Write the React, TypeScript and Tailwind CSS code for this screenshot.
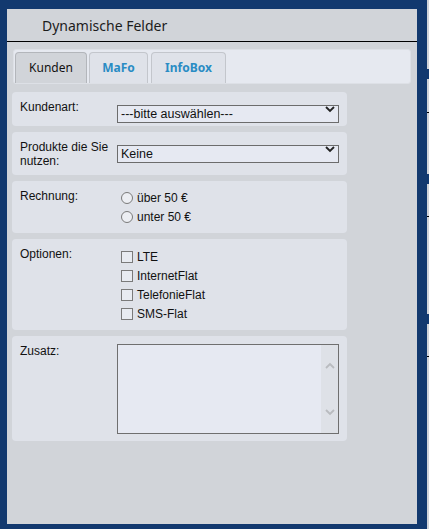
import React from 'react';

const arial = { fontFamily: '"Liberation Sans", Arial, sans-serif' };

const Chevron: React.FC<{ up?: boolean; className?: string }> = ({ up, className }) => (
  <svg width="10" height="7" viewBox="0 0 10 7" className={className}>
    <path
      d={up ? 'M1 6 L5 2 L9 6' : 'M1 1 L5 5 L9 1'}
      fill="none"
      stroke="currentColor"
      strokeWidth="1.8"
    />
  </svg>
);

const Select: React.FC<{ value: string }> = ({ value }) => (
  <div className="relative w-[222px] h-[18px]">
    <select
      defaultValue={value}
      className="appearance-none w-full h-full border border-[#6c6c6c] bg-[#e6e9f2] pl-[3px] text-[12.5px] leading-[16px] text-[#111] outline-none"
      style={arial}
    >
      <option>{value}</option>
    </select>
    <Chevron className="absolute right-[4px] top-[6px] text-[#222] pointer-events-none" />
  </div>
);

const Section: React.FC<{ label: string; className?: string; children: React.ReactNode }> = ({
  label,
  className,
  children,
}) => (
  <div className={`flex rounded-[4px] bg-[#dfe2e9] pl-[8px] pr-[8px] pt-[8px] ${className ?? ''}`}>
    <div className="w-[97px] shrink-0 text-[12px] leading-[14px] text-[#111]" style={arial}>
      {label}
    </div>
    <div className="flex-1">{children}</div>
  </div>
);

const Radio: React.FC<{ label: string }> = ({ label }) => (
  <label className="flex items-center h-[19px] pl-[4px] gap-[4px] text-[12px] text-[#111]" style={arial}>
    <span className="w-[12px] h-[12px] rounded-full border border-[#7a7a7a] bg-[#eceef3]" />
    {label}
  </label>
);

const Check: React.FC<{ label: string }> = ({ label }) => (
  <label className="flex items-center h-[19px] pl-[4px] gap-[4px] text-[12px] text-[#111]" style={arial}>
    <span className="w-[12px] h-[12px] border border-[#7a7a7a] bg-[#e8ebf1]" />
    {label}
  </label>
);

export default function App() {
  const tabs = [
    { name: 'Kunden', width: 'w-[72px]', active: true, gap: 'ml-0' },
    { name: 'MaFo', width: 'w-[59px]', active: false, gap: 'ml-[2px]' },
    { name: 'InfoBox', width: 'w-[75px]', active: false, gap: 'ml-[3px]' },
  ];

  return (
    <div className="w-[429px] h-[529px] bg-[#12396f] flex overflow-hidden">
      {/* Main panel */}
      <div className="ml-[7px] mt-[9px] w-[410px] h-[515px] bg-[#d1d4d9] flex flex-col">
        <div
          className="h-[33px] border-b border-black flex items-center pl-[35px] text-[14px] text-[#1c1c1c]"
          style={{ fontFamily: '"Noto Sans", sans-serif' }}
        >
          Dynamische Felder
        </div>

        {/* Tabs */}
        <div className="ml-[6px] mt-[7px] w-[398px] h-[35px] rounded-[3px] bg-[#e6e9f0] border border-[#dde0e6] flex items-end pl-[1px]">
          {tabs.map((t) => (
            <div
              key={t.name}
              className={`${t.width} ${t.gap} h-[31px] rounded-t-[4px] border border-b-0 flex items-center justify-center text-[12px] ${
                t.active
                  ? 'bg-[#d1d4d9] border-[#b3b6bb] text-[#111]'
                  : 'bg-[#dfe2e9] border-[#c3c6cc] text-[#2a8cc4] font-bold'
              }`}
              style={{ fontFamily: '"Noto Sans", sans-serif' }}
            >
              {t.name}
            </div>
          ))}
        </div>

        {/* Form sections */}
        <div className="ml-[5px] mt-[8px] w-[335px] flex flex-col gap-[6px]">
          <Section label="Kundenart:" className="pb-[8px]">
            <Select value="---bitte auswählen---" />
          </Section>

          <Section label="Produkte die Sie nutzen:" className="pb-[7px]">
            <Select value="Keine" />
          </Section>

          <Section label="Rechnung:" className="pb-[7px]">
            <div className="-mt-[1px]">
              <Radio label="über 50 €" />
              <Radio label="unter 50 €" />
            </div>
          </Section>

          <Section label="Optionen:" className="pb-[7px]">
            <Check label="LTE" />
            <Check label="InternetFlat" />
            <Check label="TelefonieFlat" />
            <Check label="SMS-Flat" />
          </Section>

          <Section label="Zusatz:" className="pb-[7px]">
            <div className="w-[222px] h-[90px] border border-[#6f6f6f] bg-[#e6e9f2] flex">
              <textarea className="flex-1 resize-none bg-transparent outline-none" />
              <div className="w-[17px] bg-[#dee1e7] flex flex-col items-center justify-between pt-[17px] pb-[17px] text-[#b9bbbf]">
                <Chevron up />
                <Chevron />
              </div>
            </div>
          </Section>
        </div>
      </div>

      {/* Edge of the panel behind */}
      <div className="ml-auto w-[2px] h-full bg-[#d1d4d9] flex flex-col">
        <div className="h-[69px]" />
        <div className="h-[10px] bg-[#12396f]" />
        <div className="h-[33px]" />
        <div className="h-[1px] bg-black" />
        <div className="h-[61px]" />
        <div className="h-[10px] bg-[#12396f]" />
        <div className="h-[32px]" />
        <div className="h-[1px] bg-black" />
        <div className="h-[97px]" />
        <div className="h-[10px] bg-[#12396f]" />
        <div className="h-[32px]" />
        <div className="h-[1px] bg-black" />
      </div>
    </div>
  );
}
